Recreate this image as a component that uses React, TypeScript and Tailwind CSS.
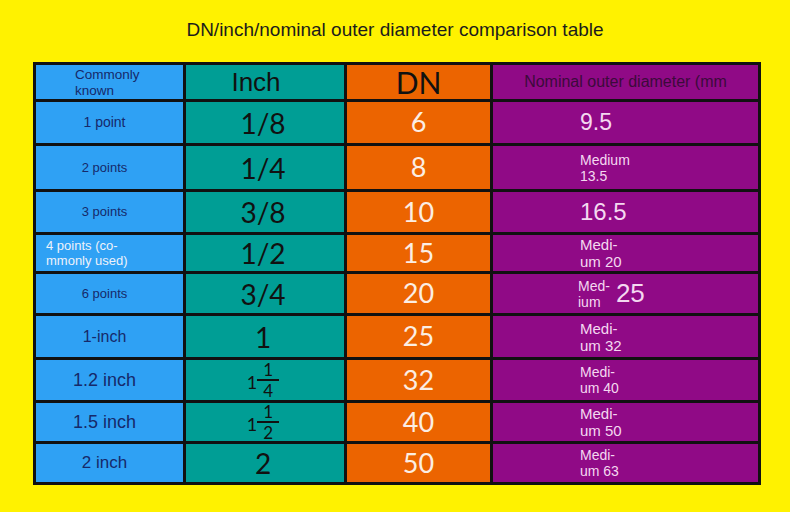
import type { ReactNode } from 'react'

const sans = { fontFamily: '"Liberation Sans", Arial, sans-serif' }
const lato = { fontFamily: 'Lato, "Liberation Sans", sans-serif' }

// Mixed number like 1¼ with a stacked fraction
function Mixed({ whole, num, den }: { whole: string; num: string; den: string }) {
  return (
    <span className="inline-flex items-center text-[#111]" style={lato}>
      <span className="text-[18px] leading-[18px] mt-[3px]">{whole}</span>
      <span className="flex flex-col items-center text-[17px] leading-[17px]">
        <span>{num}</span>
        <span className="w-[22px] h-[2px] my-[1px] bg-[#111]" />
        <span>{den}</span>
      </span>
    </span>
  )
}

function Medi({ a, b, size = 'text-[15px] leading-[17px]' }: { a: string; b: string; size?: string }) {
  return (
    <div className={`${size} flex flex-col`}>
      <span>{a}</span>
      <span>{b}</span>
    </div>
  )
}

type Row = { known: ReactNode; inch: ReactNode; dn: string; od: ReactNode; knownSize?: string }

const small = 'text-[14px] leading-[16px]'

const rows: Row[] = [
  { known: '1 point', knownSize: 'text-[14px]', inch: '1/8', dn: '6', od: <span className="text-[23px]">9.5</span> },
  { known: '2 points', knownSize: 'text-[13px]', inch: '1/4', dn: '8', od: <Medi a="Medium" b="13.5" size={small} /> },
  { known: '3 points', knownSize: 'text-[13px]', inch: '3/8', dn: '10', od: <span className="text-[24px]">16.5</span> },
  { known: null, inch: '1/2', dn: '15', od: <Medi a="Medi-" b="um 20" /> },
  {
    known: '6 points',
    knownSize: 'text-[13px]',
    inch: '3/4',
    dn: '20',
    od: (
      <div className="flex items-center -ml-[2px]">
        <Medi a="Med-" b="ium" size={small} />
        <span className="text-[26px] ml-[6px]">25</span>
      </div>
    ),
  },
  { known: '1-inch', knownSize: 'text-[16px]', inch: '1', dn: '25', od: <Medi a="Medi-" b="um 32" /> },
  { known: '1.2 inch', knownSize: 'text-[18px]', inch: <Mixed whole="1" num="1" den="4" />, dn: '32', od: <Medi a="Medi-" b="um 40" size={small} /> },
  { known: '1.5 inch', knownSize: 'text-[18px]', inch: <Mixed whole="1" num="1" den="2" />, dn: '40', od: <Medi a="Medi-" b="um 50" /> },
  { known: '2 inch', knownSize: 'text-[17px]', inch: '2', dn: '50', od: <Medi a="Medi-" b="um 63" size={small} /> },
]

export default function App() {
  return (
    <div className="w-[790px] h-[512px] bg-[#fff200] flex flex-col" style={sans}>
      <div className="h-[62px] flex items-center justify-center pb-[2px]">
        <h1 className="text-[19px] text-[#1c1c1c]">DN/inch/nominal outer diameter comparison table</h1>
      </div>

      <div className="ml-[33px] w-[728px] grid grid-cols-[147px_158px_143px_265px] grid-rows-[34px_41px_43px_40px_36px_39px_41px_40px_38px_38px] gap-[3px] p-[3px] bg-[#111]">
        {/* Header */}
        <div className="bg-[#2fa1f4] pl-[39px] pt-[2px] text-[13.5px] leading-[16px] text-[#16296a]">
          <div>Commonly</div>
          <div>known</div>
        </div>
        <div className="bg-[#009e95] flex items-center justify-center pr-[18px] text-[26px] text-[#111]">
          Inch
        </div>
        <div className="bg-[#ec6400] flex items-center justify-center text-[30px] text-[#111] pt-[1px]" style={lato}>
          DN
        </div>
        <div className="bg-[#900a86] flex items-center justify-center text-[16px] text-[#3c0a3b]">
          Nominal outer diameter (mm
        </div>

        {rows.map((r, i) => (
          <div key={i} className="contents">
            {r.known ? (
              <div className={`bg-[#2fa1f4] flex items-center justify-center pr-[10px] text-[#16296a] ${r.knownSize}`}>
                {r.known}
              </div>
            ) : (
              <div className="bg-[#2fa1f4] flex flex-col justify-center pl-[10px] text-[13px] leading-[15px] text-[#eef2fa]">
                <span>4 points (co-</span>
                <span>mmonly used)</span>
              </div>
            )}
            <div className="bg-[#009e95] flex items-center justify-center pr-[4px] text-[28px] text-[#111]" style={lato}>
              {r.inch}
            </div>
            <div className="bg-[#ec6400] flex items-center justify-center text-[27px] text-[#fbeee4]" style={lato}>
              {r.dn}
            </div>
            <div className="bg-[#900a86] flex items-center pl-[87px] text-[#f4d8f0]">{r.od}</div>
          </div>
        ))}
      </div>
    </div>
  )
}
